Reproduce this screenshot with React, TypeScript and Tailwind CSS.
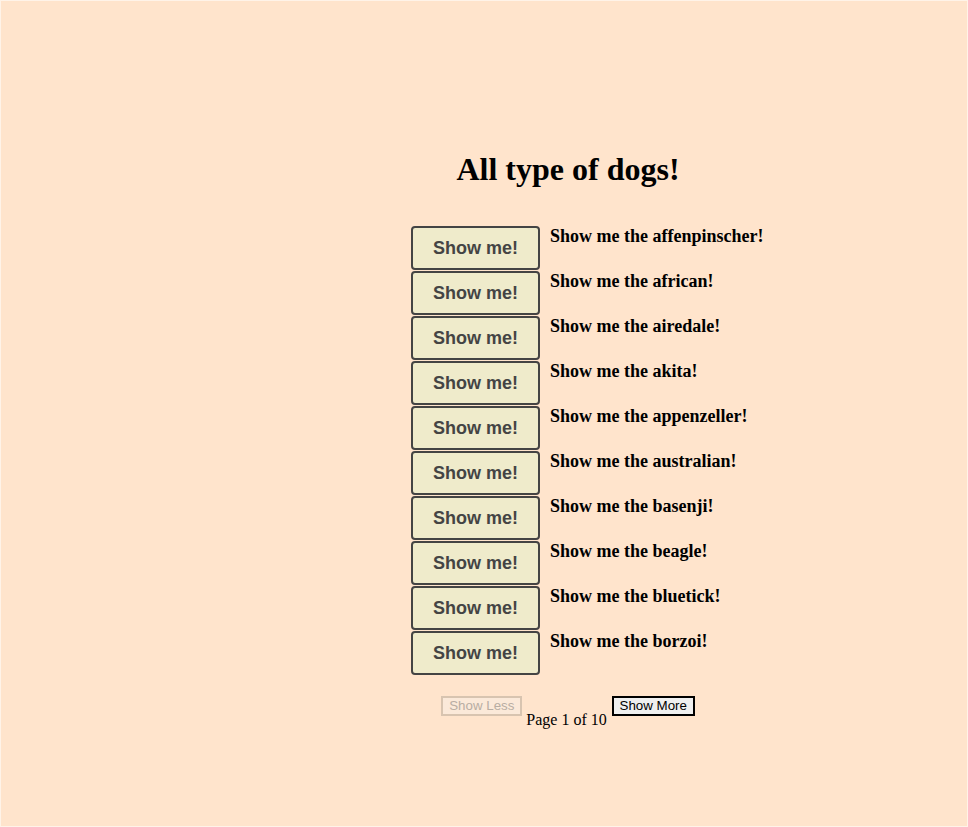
import React from "react";

const breeds = [
  "affenpinscher",
  "african",
  "airedale",
  "akita",
  "appenzeller",
  "australian",
  "basenji",
  "beagle",
  "bluetick",
  "borzoi",
];

export default function App() {
  return (
    <div className="h-[827px] w-[968px] overflow-hidden border border-[#fff3e8] bg-[#ffe4cc] font-['Liberation_Serif',serif] text-black">
      <div className="ml-[167px] w-[800px] pt-[151px]">
        <h1 className="text-center text-[32px] font-bold leading-[35px]">All type of dogs!</h1>
        <div className="ml-[243px] mt-[39px] flex flex-col">
          {breeds.map((b) => (
            <div key={b} className="flex h-[45px] items-start">
              <button className="flex h-[44px] w-[129px] items-center justify-center rounded-[4px] border-2 border-[#444444] bg-[#efebcb] font-['Liberation_Sans',Arial,sans-serif] text-[18px] font-bold text-[#444444]">
                Show me!
              </button>
              <div className="ml-[10px] text-[18px] font-bold leading-[21px]">Show me the {b}!</div>
            </div>
          ))}
        </div>
        <div className="mt-[20px] flex justify-center items-start">
          <button
            disabled
            className="h-[20px] w-[81px] border-2 border-[#d8c4b0] bg-[#fbe9d9] font-['Liberation_Sans',Arial,sans-serif] text-[13.33px] leading-[16px] text-[#b8ada3]"
          >
            Show Less
          </button>
          <span className="ml-[4px] mr-[5px] mt-[15px] text-[16px] leading-[18px]">Page 1 of 10</span>
          <button className="h-[20px] w-[83px] border-2 border-black bg-[#efefef] font-['Liberation_Sans',Arial,sans-serif] text-[13.33px] leading-[16px] text-black">
            Show More
          </button>
        </div>
      </div>
    </div>
  );
}
